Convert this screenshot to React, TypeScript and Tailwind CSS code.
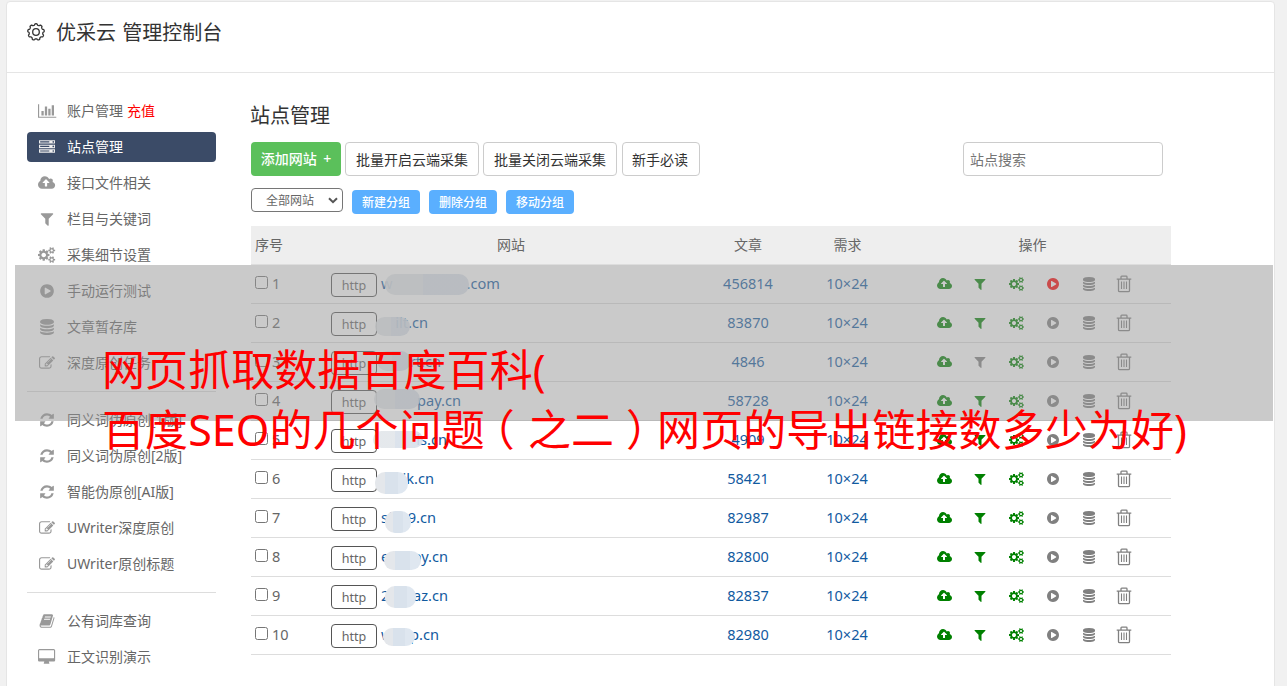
import * as React from 'react';
import clsx from 'clsx';

type IconDef = { w: number; d: string };

const COG_SMALL =
  'v140q0 16-149 31-12 27-30 52 51 113 51 138 0 4-4 7-122 71-124 71-8 0-46-47t-52-68q-20 2-30 2t-30-2q-14 21-52 68t-46 47q-2 0-124-71-4-3-4-7 0-25 51-138-18-25-30-52-149-15-149-31v-140q0-16 149-31 13-29 30-52-51-113-51-138 0-4 4-7 4-2 35-20t59-34 30-16q8 0 46 46.5t52 67.5q20-2 30-2t30 2q51-71 92-112l6-2q4 0 124 70 4 3 4 7 0 25-51 138 17 23 30 52 149 15 149 31z';

const icons = {
  chart: {
    w: 2048,
    d: 'M640 896v512h-256v-512h256zm384-512v1024h-256v-1024h256zm1024 1152v128h-2048v-1536h128v1408h1920zm-640-896v768h-256v-768h256zm384-384v1152h-256v-1152h256z',
  },
  server: {
    w: 1792,
    d: 'M128 1408h1024v-128h-1024v128zm0-512h1024v-128h-1024v128zm1568 448q0-40-28-68t-68-28-68 28-28 68 28 68 68 28 68-28 28-68zm-1568-960h1024v-128h-1024v128zm1568 448q0-40-28-68t-68-28-68 28-28 68 28 68 68 28 68-28 28-68zm0-512q0-40-28-68t-68-28-68 28-28 68 28 68 68 28 68-28 28-68zm96 832v384h-1792v-384h1792zm0-512v384h-1792v-384h1792zm0-512v384h-1792v-384h1792z',
  },
  cloud: {
    w: 1920,
    d: 'M1280 864q0-14-9-23l-352-352q-9-9-23-9t-23 9l-351 351q-10 12-10 24 0 14 9 23t23 9h224v352q0 13 9.5 22.5t22.5 9.5h192q13 0 22.5-9.5t9.5-22.5v-352h224q13 0 22.5-9.5t9.5-22.5zm640 288q0 159-112.5 271.5t-271.5 112.5h-1088q-185 0-316.5-131.5t-131.5-316.5q0-130 70-240t188-165q-2-30-2-43 0-212 150-362t362-150q156 0 285.5 87t188.5 231q71-62 166-62 106 0 181 75t75 181q0 76-41 138 130 31 213.5 135.5t83.5 238.5z',
  },
  filter: {
    w: 1792,
    d: 'M1595 295q17 41-14 70l-493 493v742q0 42-39 59-13 5-25 5-27 0-45-19l-256-256q-19-19-19-45v-486l-493-493q-31-29-14-70 17-39 59-39h1280q42 0 59 39z',
  },
  cogs: {
    w: 1920,
    d:
      'M896 896q0-106-75-181t-181-75-181 75-75 181 75 181 181 75 181-75 75-181zm768 512q0-52-38-90t-90-38-90 38-38 90q0 53 37.5 90.5t90.5 37.5 90.5-37.5 37.5-90.5zm0-1024q0-52-38-90t-90-38-90 38-38 90q0 53 37.5 90.5t90.5 37.5 90.5-37.5 37.5-90.5zm-384 421v185q0 10-7 19.5t-16 10.5l-155 24q-11 35-32 76 34 48 90 115 7 11 7 20 0 12-7 19-23 30-82.5 89.5t-78.5 59.5q-11 0-21-7l-115-90q-37 19-77 31-11 108-23 155-7 24-30 24h-186q-11 0-20-7.5t-10-17.5l-23-153q-34-10-75-31l-118 89q-7 7-20 7-11 0-21-8-144-133-144-160 0-9 7-19 10-14 41-53t47-61q-23-44-35-82l-152-24q-10-1-17-9.5t-7-19.5v-185q0-10 7-19.5t16-10.5l155-24q11-35 32-76-34-48-90-115-7-11-7-20 0-12 7-20 22-30 82-89t79-59q11 0 21 7l115 90q34-18 77-32 11-108 23-154 7-24 30-24h186q11 0 20 7.5t10 17.5l23 153q34 10 75 31l118-89q8-7 20-7 11 0 21 8 144 133 144 160 0 8-7 19-12 16-42 54t-45 60q23 48 34 82l152 23q10 2 17 10.5t7 19.5z' +
      'M1920 1338' + COG_SMALL + 'M1920 314' + COG_SMALL,
  },
  play: {
    w: 1792,
    d: 'M896 128q209 0 385.5 103t279.5 279.5 103 385.5-103 385.5-279.5 279.5-385.5 103-385.5-103-279.5-279.5-103-385.5 103-385.5 279.5-279.5 385.5-103zm384 823q32-18 32-55t-32-55l-544-320q-31-19-64-1-32 19-32 56v640q0 37 32 56 16 8 32 8 17 0 32-9z',
  },
  database: {
    w: 1792,
    d: 'M896 768q237 0 443-43t325-127v170q0 69-103 128t-280 93.5-385 34.5-385-34.5-280-93.5-103-128v-170q119 84 325 127t443 43zm0 768q237 0 443-43t325-127v170q0 69-103 128t-280 93.5-385 34.5-385-34.5-280-93.5-103-128v-170q119 84 325 127t443 43zm0-384q237 0 443-43t325-127v170q0 69-103 128t-280 93.5-385 34.5-385-34.5-280-93.5-103-128v-170q119 84 325 127t443 43zm0-1152q208 0 385 34.5t280 93.5 103 128v128q0 69-103 128t-280 93.5-385 34.5-385-34.5-280-93.5-103-128v-128q0-69 103-128t280-93.5 385-34.5z',
  },
  edit: {
    w: 1792,
    d: 'M888 1184l116-116-152-152-116 116v56h96v96h56zm440-720q-16-16-33 1l-350 350q-17 17-1 33t33-1l350-350q17-17 1-33zm80 594v190q0 119-84.5 203.5t-203.5 84.5h-832q-119 0-203.5-84.5t-84.5-203.5v-832q0-119 84.5-203.5t203.5-84.5h832q63 0 117 25 15 7 18 23 3 17-9 29l-49 49q-14 14-32 8-23-6-45-6h-832q-66 0-113 47t-47 113v832q0 66 47 113t113 47h832q66 0 113-47t47-113v-126q0-13 9-22l64-64q15-15 35-7t20 29zm-96-738l288 288-672 672h-288v-288zm444 132l-92 92-288-288 92-92q28-28 68-28t68 28l152 152q28 28 28 68t-28 68z',
  },
  refresh: {
    w: 1792,
    d: 'M1639 1056q0 5-1 7-64 268-268 434.5t-478 166.5q-146 0-282.5-55t-243.5-157l-129 129q-19 19-45 19t-45-19-19-45v-448q0-26 19-45t45-19h448q26 0 45 19t19 45-19 45l-137 137q71 66 161 102t187 36q134 0 250-65t186-179q11-17 53-117 8-23 30-23h192q13 0 22.5 9.5t9.5 22.5zm25-800v448q0 26-19 45t-45 19h-448q-26 0-45-19t-19-45 19-45l138-138q-148-137-349-137-134 0-250 65t-186 179q-11 17-53 117-8 23-30 23h-199q-13 0-22.5-9.5t-9.5-22.5v-7q65-268 270-434.5t480-166.5q146 0 284 55.5t245 156.5l130-129q19-19 45-19t45 19 19 45z',
  },
  book: {
    w: 1792,
    d: 'M1703 478q40 57 18 129l-275 906q-19 64-76.5 107.5t-122.5 43.5h-923q-77 0-148.5-53.5t-99.5-131.5q-24-67-2-127 0-4 3-27t4-37q1-8-3-21.5t-3-19.5q2-11 8-21t16.5-23.5 16.5-23.5q23-38 45-91.5t30-91.5q3-10 .5-30t-.5-28q3-11 17-28t17-23q21-36 42-92t25-90q1-9-2.5-32t.5-28q4-13 22-30.5t22-22.5q19-26 42.5-84.5t27.5-96.5q1-8-3-25.5t-2-26.5q2-8 9-18t18-23 17-21q8-12 16.5-30.5t15-35 16-36 19.5-32 26.5-23.5 36-11.5 47.5 5.5l-1 3q38-9 51-9h761q74 0 114 56t18 130l-274 906q-36 119-71.5 153.5t-128.5 34.5h-869q-27 0-38 15-11 16-1 43 24 70 144 70h923q29 0 56-15.5t35-41.5l300-987q7-22 5-57 38 15 59 43zm-1064 2q-4 13 2 22.5t20 9.5h608q13 0 25.5-9.5t16.5-22.5l21-64q4-13-2-22.5t-20-9.5h-608q-13 0-25.5 9.5t-16.5 22.5zm-83 256q-4 13 2 22.5t20 9.5h608q13 0 25.5-9.5t16.5-22.5l21-64q4-13-2-22.5t-20-9.5h-608q-13 0-25.5 9.5t-16.5 22.5z',
  },
  desktop: {
    w: 1920,
    d: 'M1792 992v-832q0-13-9.5-22.5t-22.5-9.5h-1600q-13 0-22.5 9.5t-9.5 22.5v832q0 13 9.5 22.5t22.5 9.5h1600q13 0 22.5-9.5t9.5-22.5zm128-832v1088q0 66-47 113t-113 47h-544q0 37 16 77.5t32 71 16 43.5q0 26-19 45t-45 19h-512q-26 0-45-19t-19-45q0-14 16-44t32-70 16-78h-544q-66 0-113-47t-47-113v-1088q0-66 47-113t113-47h1600q66 0 113 47t47 113z',
  },
} satisfies Record<string, IconDef>;

type IconName = keyof typeof icons;

function Icon({ name, className }: { name: IconName; className?: string }) {
  const { w, d } = icons[name];
  return (
    <svg viewBox={`0 0 ${w} 1792`} className={clsx('w-auto shrink-0 overflow-visible', className)} fill="currentColor">
      <path d={d} />
    </svg>
  );
}

function TrashIcon() {
  return (
    <svg viewBox="0 0 16 18" className="h-[18px] w-4" fill="none" stroke="currentColor" strokeWidth="1.3">
      <path d="M.7 4.1h14.6M5 4V1.9q0-.7.7-.7h4.6q.7 0 .7.7V4M2.5 4.3v11.1q0 1.2 1.2 1.2h8.6q1.2 0 1.2-1.2V4.3" />
      <path d="M5.5 6.5v7.5M8 6.5v7.5M10.5 6.5v7.5" strokeWidth="1.1" />
    </svg>
  );
}

function GearIcon() {
  // Scalloped outline, one shallow bump per 40 degrees
  const n = 9;
  const points = Array.from({ length: 145 }, (_, i) => {
    const a = (i / 144) * Math.PI * 2;
    const r = 7.6 + 0.7 * Math.tanh(2.2 * Math.cos(n * a));
    return `${(9 + r * Math.sin(a)).toFixed(2)},${(9 - r * Math.cos(a)).toFixed(2)}`;
  });
  return (
    <svg viewBox="0 0 18 18" className="size-[18px]" fill="none" stroke="#333" strokeWidth="1.3">
      <polygon points={points.join(' ')} strokeLinejoin="round" />
      <circle cx="9" cy="9" r="3.3" />
    </svg>
  );
}

type MenuItem = { icon: IconName; label: string; extra?: string; active?: boolean };

const menuGroups: MenuItem[][] = [
  [
    { icon: 'chart', label: '账户管理', extra: '充值' },
    { icon: 'server', label: '站点管理', active: true },
    { icon: 'cloud', label: '接口文件相关' },
    { icon: 'filter', label: '栏目与关键词' },
    { icon: 'cogs', label: '采集细节设置' },
    { icon: 'play', label: '手动运行测试' },
    { icon: 'database', label: '文章暂存库' },
    { icon: 'edit', label: '深度原创任务' },
  ],
  [
    { icon: 'refresh', label: '同义词伪原创[1版]' },
    { icon: 'refresh', label: '同义词伪原创[2版]' },
    { icon: 'refresh', label: '智能伪原创[AI版]' },
    { icon: 'edit', label: 'UWriter深度原创' },
    { icon: 'edit', label: 'UWriter原创标题' },
  ],
  [
    { icon: 'book', label: '公有词库查询' },
    { icon: 'desktop', label: '正文识别演示' },
  ],
];

// width: the whole host name; mask: the smudge over its middle
const sites = [
  { head: 'w', tail: '.com', width: 'w-[119px]', mask: 'left-[54px] top-[9px] h-[21px] w-[84px]', count: 456814 },
  { head: '', tail: 'ilt.cn', width: 'w-[47px]', mask: 'left-[44px] top-[13px] h-[19px] w-[35px]', count: 83870 },
  { head: '', tail: 'rt.cn', width: 'w-[60px]', mask: 'left-[46px] top-[8px] h-[20px] w-[34px]', count: 4846 },
  { head: '', tail: 'pay.cn', width: 'w-[80px]', mask: 'left-[43px] top-[7px] h-[20px] w-[46px]', count: 58728 },
  { head: '', tail: 'ls.cn', width: 'w-[66px]', mask: 'left-[42px] top-[10px] h-[17px] w-[50px]', count: 4909 },
  { head: '', tail: 'ik.cn', width: 'w-[53px]', mask: 'left-[44px] top-[12px] h-[22px] w-[33px]', count: 58421 },
  { head: 'sf', tail: '89.cn', width: 'w-[55px]', mask: 'left-[54px] top-[12px] h-[22px] w-[26px]', count: 82987 },
  { head: 'e', tail: 'py.cn', width: 'w-[67px]', mask: 'left-[53px] top-[13px] h-[19px] w-[37px]', count: 82800 },
  { head: '2', tail: 'az.cn', width: 'w-[67px]', mask: 'left-[54px] top-[9px] h-[22px] w-[31px]', count: 82837 },
  { head: 'w', tail: 'p.cn', width: 'w-[58px]', mask: 'left-[52px] top-[12px] h-[18px] w-[32px]', count: 82980 },
];

const rowGrid = 'grid grid-cols-[80px_360px_114px_85px_281px] h-[39px] border-b border-[#ddd]';

function Sidebar() {
  return (
    <nav className="w-[189px] shrink-0 pt-[23px]">
      {menuGroups.map((group, g) => (
        <div key={g} className={clsx('flex flex-col gap-1.5', g > 0 && 'mt-[13px] border-t border-[#ddd] pt-[13px]')}>
          {group.map((item) => (
            <a
              key={item.label}
              className={clsx(
                'flex h-[30px] items-center rounded-[4px] pl-2.5 text-[14px]',
                item.active ? 'bg-[#3b4b67] text-white' : 'text-[#666]',
              )}
            >
              <span className={clsx('mr-2.5 flex w-5 justify-center', item.active ? 'text-[#eee]' : 'text-[#999]')}>
                <Icon name={item.icon} className="h-4" />
              </span>
              <span className="pb-0.5">
                {item.label}
                {item.extra && <span className="ml-1 text-[#f00]">{item.extra}</span>}
              </span>
            </a>
          ))}
        </div>
      ))}
    </nav>
  );
}

function Toolbar() {
  return (
    <>
      <div className="mt-3 flex h-[34px] gap-1 text-[14px] text-[#333]">
        <button className="w-[90px] rounded-[4px] bg-[#5bc05b] pb-0.5 font-medium [word-spacing:3px] text-white">
          添加网站 +
        </button>
        <button className="w-[134px] rounded-[4px] border border-[#ccc]">批量开启云端采集</button>
        <button className="w-[134px] rounded-[4px] border border-[#ccc]">批量关闭云端采集</button>
        <button className="ml-px w-[78px] rounded-[4px] border border-[#ccc] pr-0.5">新手必读</button>
        <input
          placeholder="站点搜索"
          className="mr-2 ml-auto w-[200px] rounded-[4px] border border-[#ccc] px-1.5 outline-none placeholder:text-[#757575]"
        />
      </div>
      <div className="mt-3 flex h-[26px] gap-[9px] text-[12px] text-white">
        <div className="flex h-6 w-[92px] items-center justify-between rounded-[4px] border border-[#767676] pt-px pr-1 pl-[14px] text-[#666]">
          全部网站
          <svg viewBox="0 0 10 7" className="h-[7px] w-2.5" fill="none" stroke="#555" strokeWidth="2">
            <path d="M1 1.2l4 4 4-4" />
          </svg>
        </div>
        {['新建分组', '删除分组', '移动分组'].map((label) => (
          <button key={label} className="mt-0.5 h-6 w-[68px] rounded-[4px] bg-[#5aafff] pt-0.5 font-medium">
            {label}
          </button>
        ))}
      </div>
    </>
  );
}

function SiteTable() {
  return (
    <div className="mt-3 w-[920px] text-[14px] text-[#666]">
      <div className={clsx(rowGrid, 'items-center bg-[#eee] pb-0.5 text-center')}>
        <span className="pl-1 text-left">序号</span>
        <span>网站</span>
        <span>文章</span>
        <span>需求</span>
        <span className="pl-1">操作</span>
      </div>
      {sites.map((site, i) => (
        <div key={site.count} className={rowGrid}>
          <label className="flex items-center gap-1 pl-1 text-[14.5px]">
            <span className="mb-[3px] size-[13px] rounded-[2.5px] border border-[#767676] bg-white" />
            {i + 1}
          </label>
          <div className="relative flex items-center text-[14.6px]">
            <button className="mt-px mr-1 h-6 w-[46px] rounded-[4px] border border-[#555] pt-[3px] text-[12.5px] leading-[18px]">
              http
            </button>
            <a className={clsx('flex justify-between text-[#115a9f]', site.width)}>
              <span>{site.head}</span>
              <span>{site.tail}</span>
            </a>
            <span
              className={clsx(
                'absolute rounded-[10px]',
                i < 5
                  ? 'bg-[linear-gradient(90deg,#e2e6ea_0_45%,#d8e0ea_45%)]'
                  : 'bg-[linear-gradient(90deg,#e4e7eb_0_30%,#d9e2ec_30%_70%,#dfe7f0_70%)]',
                i < 5 && 'opacity-90',
                site.mask,
              )}
            />
          </div>
          <span className="self-center text-center text-[14.5px] text-[#115a9f]">{site.count}</span>
          <span className="self-center pr-px text-center text-[14.5px] text-[#115a9f]">10×24</span>
          <div className="grid grid-cols-[repeat(6,36px)] items-center justify-items-center pl-9 text-[#008000]">
            <Icon name="cloud" className="h-3.5" />
            <Icon name="filter" className={clsx('h-3.5', i === 2 && 'text-[#808080]')} />
            <Icon name="cogs" className="h-3.5" />
            <Icon name="play" className={clsx('ml-px h-3.5', i === 0 ? 'text-[#f00]' : 'text-[#808080]')} />
            <Icon name="database" className="ml-px h-3.5 text-[#808080]" />
            <span className="mr-px text-[#808080]">
              <TrashIcon />
            </span>
          </div>
        </div>
      ))}
    </div>
  );
}

export default function App() {
  return (
    <div className="relative h-[686px] w-[1287px] overflow-hidden bg-[#f1f1f1] pt-px pl-1.5 font-['Noto_Sans','Noto_Sans_CJK_SC',sans-serif]">
      <div className="h-[700px] w-[1269px] rounded-[4px] border border-[#e5e5e5] bg-white">
        <header className="flex h-[71px] items-start gap-[11px] border-b border-[#e5e5e5] pt-4 pl-5 text-[20px] leading-[30px] text-[#333]">
          <span className="pt-[5px]">
            <GearIcon />
          </span>
          <span className="[word-spacing:1px]">优采云 管理控制台</span>
        </header>
        <div className="flex pl-5">
          <Sidebar />
          <main className="ml-[35px] w-[920px] pt-7">
            <h2 className="-ml-px text-[20px] leading-[29px] text-[#333]">站点管理</h2>
            <Toolbar />
            <SiteTable />
          </main>
        </div>
      </div>

      {/* Caption band */}
      <div className="absolute top-[265px] left-[15px] h-[156px] w-[1258px] bg-[#969696]/50" />
      <div className="absolute top-[340px] left-[102px] text-[43px] leading-[60px] tracking-[0.07px] whitespace-nowrap text-[#f00]">
        <p>网页抓取数据百度百科(</p>
        <p>
          百度SEO的几个问题<span className="relative -left-[13px]">（</span>之二
          <span className="relative left-3">）</span>网页的导出链接数多少为好)
        </p>
      </div>
    </div>
  );
}
